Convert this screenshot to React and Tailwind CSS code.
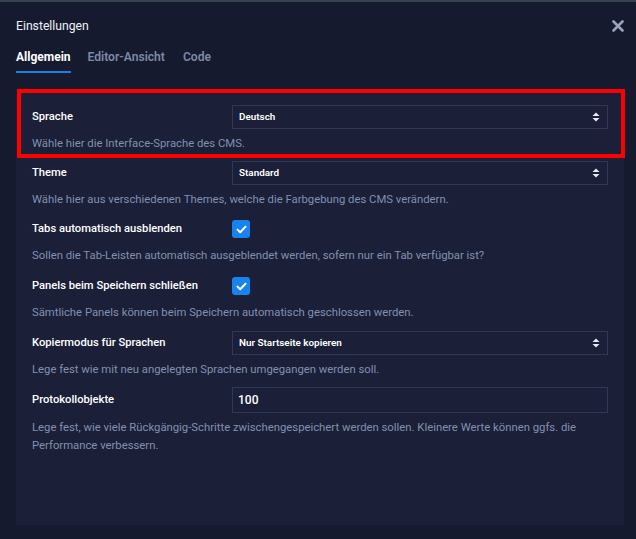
import React from "react";

function Arrows() {
  return (
    <svg width="8" height="10" viewBox="0 0 8 10" className="text-[#e8ebf3]">
      <path d="M4 0.5 L7.5 4 L0.5 4 Z" fill="currentColor" />
      <path d="M4 9.5 L7.5 6 L0.5 6 Z" fill="currentColor" />
    </svg>
  );
}

function Select({ value }) {
  return (
    <div className="flex h-[24px] w-full items-center justify-between border border-[#303859] bg-[#1b1f38] pl-[6px] pr-[7px]">
      <span className="text-[9.9px] font-semibold text-white">{value}</span>
      <Arrows />
    </div>
  );
}

function Check() {
  return (
    <div className="flex h-[18px] w-[18px] items-center justify-center rounded-[3px] bg-[#1883ee]">
      <svg width="11" height="9" viewBox="0 0 11 9">
        <path d="M1.5 4.6 L4.2 7.2 L9.5 1.8" fill="none" stroke="white" strokeWidth="2" strokeLinecap="round" strokeLinejoin="round" />
      </svg>
    </div>
  );
}

function Item({ label, control, desc, rowH = "h-[24px]", pb = "pb-[8px]" }) {
  return (
    <div className={pb}>
      <div className={`flex items-center ${rowH}`}>
        <div className="w-[200px] shrink-0 text-[11.2px] font-medium text-white">{label}</div>
        <div className="flex flex-1 items-center">{control}</div>
      </div>
      <p className="mt-[6px] text-[11.3px] leading-[18px] text-[#8290b0]">{desc}</p>
    </div>
  );
}

export default function App() {
  return (
    <div className="relative h-[539px] w-[636px] overflow-hidden bg-[#161a2e]" style={{ fontFamily: "Roboto, 'Noto Sans', sans-serif" }}>
      <div className="h-[2px] bg-[#36434c]" />
      <div className="flex h-[48px] items-center justify-between pl-4 pr-[12px]">
        <span className="text-[12.2px] text-[#eef0f6]">Einstellungen</span>
        <svg width="12" height="12" viewBox="0 0 12 12">
          <path d="M1.5 1.5 L10.5 10.5 M10.5 1.5 L1.5 10.5" stroke="#9aa2b9" strokeWidth="2.6" strokeLinecap="round" />
        </svg>
      </div>
      <div className="flex px-4">
        <div className="border-b-2 border-[#1a7fe2] pb-[7px] text-[12px] font-bold leading-[14px] text-white">Allgemein</div>
        <div className="ml-[17px] pb-[9px] text-[12.1px] font-semibold leading-[14px] text-[#7f89a6]">Editor-Ansicht</div>
        <div className="ml-[18px] pb-[9px] text-[12.1px] font-semibold leading-[14px] text-[#7f89a6]">Code</div>
      </div>
      <div className="ml-4 mt-4 h-[436px] w-[608px] bg-[#1b1f38] px-4 pt-4">
        <Item label="Sprache" control={<Select value="Deutsch" />} desc="Wähle hier die Interface-Sprache des CMS." />
        <Item label="Theme" control={<Select value="Standard" />} desc="Wähle hier aus verschiedenen Themes, welche die Farbgebung des CMS verändern." />
        <Item label="Tabs automatisch ausblenden" control={<Check />} pb="pb-[9px]" desc="Sollen die Tab-Leisten automatisch ausgeblendet werden, sofern nur ein Tab verfügbar ist?" />
        <Item label="Panels beim Speichern schließen" control={<Check />} pb="pb-[9px]" desc="Sämtliche Panels können beim Speichern automatisch geschlossen werden." />
        <Item label="Kopiermodus für Sprachen" control={<Select value="Nur Startseite kopieren" />} desc="Lege fest wie mit neu angelegten Sprachen umgegangen werden soll." />
        <Item
          label="Protokollobjekte"
          rowH="h-[26px]"
          control={
            <div className="flex h-[26px] w-full items-center border border-[#303859] bg-[#1b1f38] px-[5px] text-[12px] font-medium text-white">100</div>
          }
          desc="Lege fest, wie viele Rückgängig-Schritte zwischengespeichert werden sollen. Kleinere Werte können ggfs. die Performance verbessern."
        />
      </div>
      <div className="pointer-events-none absolute left-[17px] top-[89px] h-[69px] w-[608px] border-4 border-[#ff0000]" />
    </div>
  );
}
